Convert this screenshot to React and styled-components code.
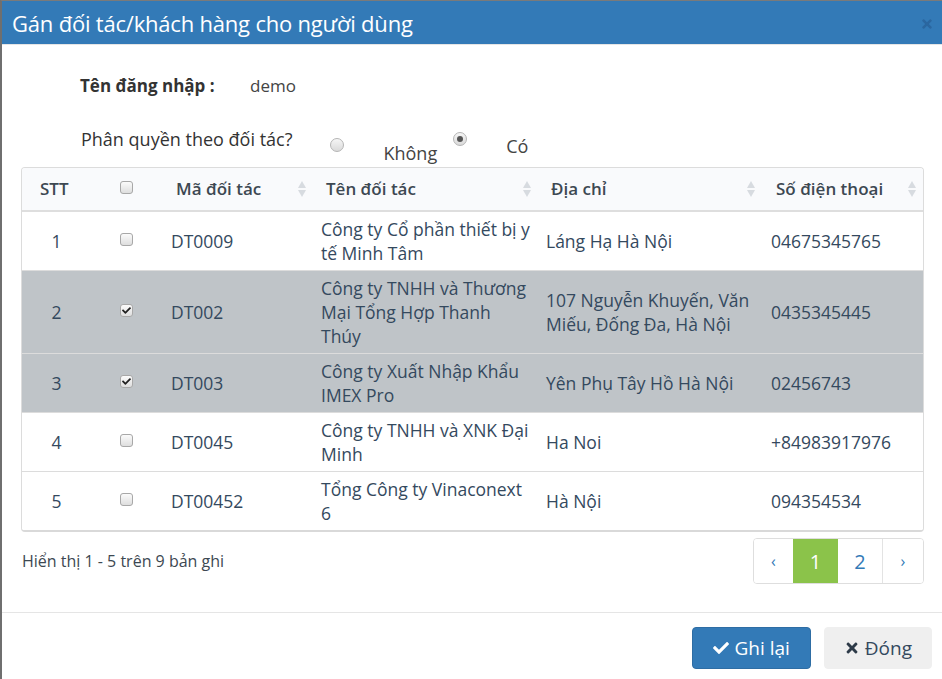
import React from "react";
import styled, { createGlobalStyle } from "styled-components";
import { FaCheck, FaTimes } from "react-icons/fa";

const GlobalStyle = createGlobalStyle`
	html, body {
		margin: 0;
		padding: 0;
		background: #fff;
		font-family: "Open Sans", "Liberation Sans", sans-serif;
		color: #34495e;
	}
`;

//-----------------------------------------------------------------------------------------------

const Modal = styled.div`
	width: 942px;
	height: 679px;
	box-sizing: border-box;
	border-top: 1px solid #7a7a7a;
	border-left: 2px solid #6f6f6f;
	display: flex;
	flex-direction: column;
	overflow: hidden;
`;

const Header = styled.header`
	height: 43px;
	background: #337ab7;
	display: flex;
	align-items: center;
	justify-content: space-between;
	padding: 0 8px 0 10px;
	border-bottom: 1px solid #e5e5e5;
`;

const Title = styled.h4`
	margin: 0;
	font-size: 22px;
	font-weight: 400;
	color: #fff;
	letter-spacing: -0.2px;
`;

const Close = styled.span`
	color: #2b67a0;
	display: flex;
	font-size: 14px;
	margin-top: 2px;
`;

const Body = styled.section`
	padding: 0 18px 0 19px;
	flex: 1;
`;

const FieldRow = styled.div`
	display: flex;
	align-items: flex-start;
	padding-left: ${(p) => p.$indent}px;
	margin-top: ${(p) => p.$top}px;
	height: ${(p) => p.$height}px;
	font-size: ${(p) => p.$size}px;
	line-height: 24px;
`;

const Label = styled.span`
	font-weight: ${(p) => (p.$bold ? 700 : 400)};
	color: #333;
	width: ${(p) => p.$width}px;
`;

const Value = styled.span`
	color: #444;
`;

const RadioOption = styled.label`
	display: flex;
	align-items: flex-start;
	margin-left: ${(p) => p.$gap}px;
`;

const Radio = styled.span`
	width: 14px;
	height: 14px;
	border-radius: 50%;
	border: 1px solid #b5b5b5;
	background: linear-gradient(#f6f6f6, #dadada);
	box-sizing: border-box;
	margin-top: ${(p) => p.$top}px;
	display: flex;
	align-items: center;
	justify-content: center;

	&::after {
		content: "";
		width: 6px;
		height: 6px;
		border-radius: 50%;
		background: #555;
		display: ${(p) => (p.$checked ? "block" : "none")};
	}
`;

const RadioText = styled.span`
	color: #444;
	margin-left: ${(p) => p.$gap}px;
	margin-top: ${(p) => p.$top}px;
`;

const TableBox = styled.div`
	border: 1px solid #dcdcdc;
	border-bottom: 2px solid #d9d9d9;
	border-radius: 4px;
	overflow: hidden;
`;

const Table = styled.table`
	width: 100%;
	border-collapse: collapse;
	table-layout: fixed;
	font-size: 17.5px;
	line-height: 24px;
`;

const Th = styled.th`
	position: relative;
	height: 42px;
	padding: 0 0 0 ${(p) => p.$pad ?? 15}px;
	text-align: ${(p) => p.$align || "left"};
	font-weight: 600;
	font-size: 17px;
	color: #3d4852;
	background: #f9fafc;
	border-bottom: 2px solid #dedede;
`;

const Row = styled.tr`
	background: ${(p) => (p.$active ? "#bfc4c8" : "#fff")};
	& td {
		border-top: 1px solid #dcdcdc;
	}
`;

const Td = styled.td`
	padding: ${(p) => (p.$center ? "5px 10px" : "5px 3px 5px 10px")};
	height: 48px;
	text-align: ${(p) => (p.$center ? "center" : "left")};
	vertical-align: middle;
	color: #34495e;
`;

const SortIcon = styled.span`
	position: absolute;
	right: ${(p) => p.$right}px;
	top: 13px;
	display: flex;
	flex-direction: column;
	gap: 2px;

	&::before,
	&::after {
		content: "";
		width: 0;
		height: 0;
		border-left: 4.5px solid transparent;
		border-right: 4.5px solid transparent;
	}
	&::before {
		border-bottom: 7px solid #d7dbe0;
	}
	&::after {
		border-top: 7px solid #d7dbe0;
	}
`;

const Check = styled.span`
	display: inline-flex;
	align-items: center;
	justify-content: center;
	width: 13px;
	height: 13px;
	box-sizing: border-box;
	border: 1px solid #a8a8a8;
	border-radius: 3px;
	background: linear-gradient(#fbfbfb, #dedede);
	color: #222;
	font-size: 9px;
	vertical-align: middle;
	position: relative;
	top: ${(p) => p.$top ?? -4}px;
`;

const TableFooter = styled.div`
	display: flex;
	justify-content: space-between;
	align-items: center;
	margin-top: 6px;
	padding-left: 1px;
`;

const Info = styled.span`
	font-size: 16px;
	color: #3d4852;
`;

const Pager = styled.ul`
	display: flex;
	list-style: none;
	margin: 0;
	padding: 0;
	border: 1px solid #dedede;
	border-radius: 4px;
	overflow: hidden;
	height: 46px;
	box-sizing: border-box;
`;

const PageItem = styled.li`
	width: ${(p) => p.$width}px;
	display: flex;
	align-items: center;
	justify-content: center;
	font-size: ${(p) => (p.$arrow ? 16 : 20)}px;
	color: ${(p) => (p.$active ? "#fff" : "#337ab7")};
	background: ${(p) => (p.$active ? "#8bc34a" : "#fff")};
	border-left: ${(p) => (p.$divided ? "1px solid #e3e3e3" : "0")};
`;

const Footer = styled.footer`
	border-top: 1px solid #e5e5e5;
	display: flex;
	justify-content: flex-end;
	gap: 13px;
	padding: 14px 10px 10px 0;
`;

const Button = styled.button`
	height: 42px;
	padding: 0 ${(p) => p.$pad}px;
	display: flex;
	align-items: center;
	gap: 5px;
	font-family: "Open Sans", "Liberation Sans", sans-serif;
	font-size: 19px;
	border-radius: 4px;
	border: 1px solid ${(p) => (p.$primary ? "#2e6da4" : "#efefef")};
	background: ${(p) => (p.$primary ? "#337ab7" : "#efefef")};
	color: ${(p) => (p.$primary ? "#fff" : "#34495e")};

	svg {
		font-size: 16px;
		color: ${(p) => (p.$primary ? "#fff" : "#2d3a48")};
	}
`;

//-----------------------------------------------------------------------------------------------

const partners = [
	{ id: "DT0009", name: "Công ty Cổ phần thiết bị y tế Minh Tâm", address: "Láng Hạ Hà Nội", phone: "04675345765" },
	{ id: "DT002", name: "Công ty TNHH và Thương Mại Tổng Hợp Thanh Thúy", address: "107 Nguyễn Khuyến, Văn Miếu, Đống Đa, Hà Nội", phone: "0435345445", checked: true },
	{ id: "DT003", name: "Công ty Xuất Nhập Khẩu IMEX Pro", address: "Yên Phụ Tây Hồ Hà Nội", phone: "02456743", checked: true },
	{ id: "DT0045", name: "Công ty TNHH và XNK Đại Minh", address: "Ha Noi", phone: "+84983917976" },
	{ id: "DT00452", name: "Tổng Công ty Vinaconext 6", address: "Hà Nội", phone: "094354534" },
];

export default function App() {
	return (
		<>
			<GlobalStyle />
			<Modal>
				<Header>
					<Title>Gán đối tác/khách hàng cho người dùng</Title>
					<Close>
						<FaTimes />
					</Close>
				</Header>

				<Body>
					<FieldRow $indent={59} $top={29} $height={53} $size={17}>
						<Label $bold $width={170}>
							Tên đăng nhập :
						</Label>
						<Value>demo</Value>
					</FieldRow>

					<FieldRow $indent={60} $top={0} $height={40} $size={18}>
						<Label>Phân quyền theo đối tác?</Label>
						<RadioOption $gap={38}>
							<Radio $top={11} />
							<RadioText $gap={39} $top={14}>
								Không
							</RadioText>
						</RadioOption>
						<RadioOption $gap={16}>
							<Radio $checked $top={5} />
							<RadioText $gap={39} $top={7}>
								Có
							</RadioText>
						</RadioOption>
					</FieldRow>

					<TableBox>
						<Table>
							<colgroup>
								<col style={{ width: 69 }} />
								<col style={{ width: 70 }} />
								<col style={{ width: 150 }} />
								<col style={{ width: 225 }} />
								<col style={{ width: 225 }} />
								<col />
							</colgroup>
							<thead>
								<tr>
									<Th $pad={18}>STT</Th>
									<Th $align="center" $pad={0}>
										<Check $top={-3} />
									</Th>
									<Th>
										Mã đối tác
										<SortIcon $right={5} />
									</Th>
									<Th>
										Tên đối tác
										<SortIcon $right={5} />
									</Th>
									<Th>
										Địa chỉ
										<SortIcon $right={6} />
									</Th>
									<Th>
										Số điện thoại
										<SortIcon $right={7} />
									</Th>
								</tr>
							</thead>
							<tbody>
								{partners.map((p, i) => (
									<Row key={p.id} $active={p.checked}>
										<Td $center>{i + 1}</Td>
										<Td $center>
											<Check>{p.checked && <FaCheck />}</Check>
										</Td>
										<Td>{p.id}</Td>
										<Td>{p.name}</Td>
										<Td>{p.address}</Td>
										<Td>{p.phone}</Td>
									</Row>
								))}
							</tbody>
						</Table>
					</TableBox>

					<TableFooter>
						<Info>Hiển thị 1 - 5 trên 9 bản ghi</Info>
						<Pager>
							<PageItem $width={39} $arrow>
								‹
							</PageItem>
							<PageItem $width={45} $active>
								1
							</PageItem>
							<PageItem $width={44}>2</PageItem>
							<PageItem $width={40} $arrow $divided>
								›
							</PageItem>
						</Pager>
					</TableFooter>
				</Body>

				<Footer>
					<Button $primary $pad={20}>
						<FaCheck />
						Ghi lại
					</Button>
					<Button $pad={19}>
						<FaTimes />
						Đóng
					</Button>
				</Footer>
			</Modal>
		</>
	);
}
